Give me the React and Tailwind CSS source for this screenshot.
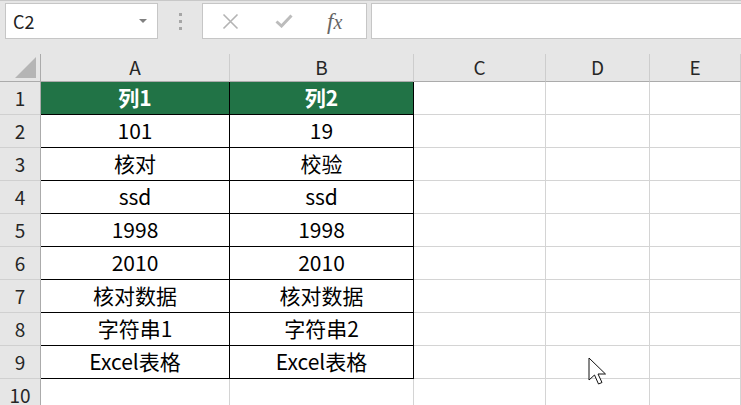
import React from 'react';

const rows = [
  ['列1', '列2'],
  ['101', '19'],
  ['核对', '校验'],
  ['ssd', 'ssd'],
  ['1998', '1998'],
  ['2010', '2010'],
  ['核对数据', '核对数据'],
  ['字符串1', '字符串2'],
  ['Excel表格', 'Excel表格'],
];

const font = { fontFamily: '"Noto Sans CJK SC", "Noto Sans", sans-serif' };

function Toolbar() {
  return (
    <div className="h-[54px] bg-[#e6e6e6] border-t border-[#c8c8c8] flex items-start pt-[2px]">
      <div className="ml-[5px] w-[153px] h-[36px] bg-white border border-[#c6c6c6] flex items-center justify-between pl-[7px] pr-[10px]">
        <span className="text-[18px] text-[#222]">C2</span>
        <svg width="8" height="5" viewBox="0 0 8 5"><path d="M0 0 L8 0 L4 4 Z" fill="#808080" /></svg>
      </div>
      <div className="w-[44px] h-[36px] flex flex-col items-center justify-center gap-[4px]">
        <div className="w-[3px] h-[3px] bg-[#a6a6a6]" />
        <div className="w-[3px] h-[3px] bg-[#a6a6a6]" />
        <div className="w-[3px] h-[3px] bg-[#a6a6a6]" />
      </div>
      <div className="w-[165px] h-[36px] bg-white border border-[#c6c6c6] flex items-center">
        <svg className="ml-[19px]" width="17" height="17" viewBox="0 0 17 17">
          <path d="M1.5 1.5 L15.5 15.5 M15.5 1.5 L1.5 15.5" stroke="#b4b4b4" strokeWidth="1.6" />
        </svg>
        <svg className="ml-[36px]" width="18" height="14" viewBox="0 0 18 14">
          <path d="M1.5 7.5 L6.5 12 L16.5 1.5" stroke="#bcbcbc" strokeWidth="3" fill="none" />
        </svg>
        <span
          className="ml-[34px] text-[23px] italic text-[#666] leading-none"
          style={{ fontFamily: '"Liberation Serif", serif' }}
        >
          f<span className="text-[20px]">x</span>
        </span>
      </div>
      <div className="ml-[4px] flex-1 h-[36px] bg-white border border-[#c6c6c6] border-r-0" />
    </div>
  );
}

function Cursor() {
  return (
    <svg className="absolute left-[588px] top-[357px]" width="20" height="29" viewBox="0 0 20 29">
      <path
        d="M1 1 L1 23 L6.5 18 L10.5 27 L14 25.5 L10 17 L17.5 17 Z"
        fill="white"
        stroke="#111"
        strokeWidth="1"
      />
    </svg>
  );
}

export default function App() {
  const cols = ['A', 'B', 'C', 'D', 'E'];
  return (
    <div className="relative w-[741px] h-[405px] overflow-hidden bg-white" style={font}>
      <Toolbar />
      <div className="grid grid-cols-[41px_189px_184px_132px_104px_1fr]">
        <div className="h-[28px] bg-[#e6e6e6] border-r border-b border-[#ababab] flex items-end justify-end">
          <svg width="21" height="21" viewBox="0 0 21 21" className="mr-[4px] mb-[3px]">
            <path d="M21 0 L21 21 L0 21 Z" fill="#b5b5b5" />
          </svg>
        </div>
        {cols.map((c) => (
          <div
            key={c}
            className="h-[28px] bg-[#e6e6e6] border-r border-b border-r-[#cdcdcd] border-b-[#ababab] flex items-center justify-center text-[19px] text-[#262626]"
          >
            {c}
          </div>
        ))}
        {rows.map((r, i) => (
          <React.Fragment key={i}>
            <div className="h-[33px] bg-[#e6e6e6] border-r border-b border-r-[#ababab] border-b-[#d0d0d0] flex items-center justify-center text-[19px] text-[#262626]">
              {i + 1}
            </div>
            {r.map((v, j) => (
              <div
                key={j}
                className={
                  i === 0
                    ? 'h-[33px] bg-[#217346] border-r border-b border-black flex items-center justify-center text-[21px] font-bold text-white'
                    : 'h-[33px] border-r border-b border-black flex items-center justify-center text-[21px] text-black'
                }
              >
                {v}
              </div>
            ))}
            <div className="h-[33px] border-r border-b border-[#d4d4d4]" />
            <div className="h-[33px] border-r border-b border-[#d4d4d4]" />
            <div className="h-[33px] border-r border-b border-[#d4d4d4]" />
          </React.Fragment>
        ))}
        <div className="h-[33px] bg-[#e6e6e6] border-r border-[#ababab] flex items-center justify-center text-[19px] text-[#262626]">
          10
        </div>
        <div className="h-[33px] border-r border-[#d4d4d4]" />
        <div className="h-[33px] border-r border-[#d4d4d4]" />
        <div className="h-[33px] border-r border-[#d4d4d4]" />
        <div className="h-[33px] border-r border-[#d4d4d4]" />
        <div className="h-[33px] border-r border-[#d4d4d4]" />
      </div>
      <Cursor />
    </div>
  );
}
